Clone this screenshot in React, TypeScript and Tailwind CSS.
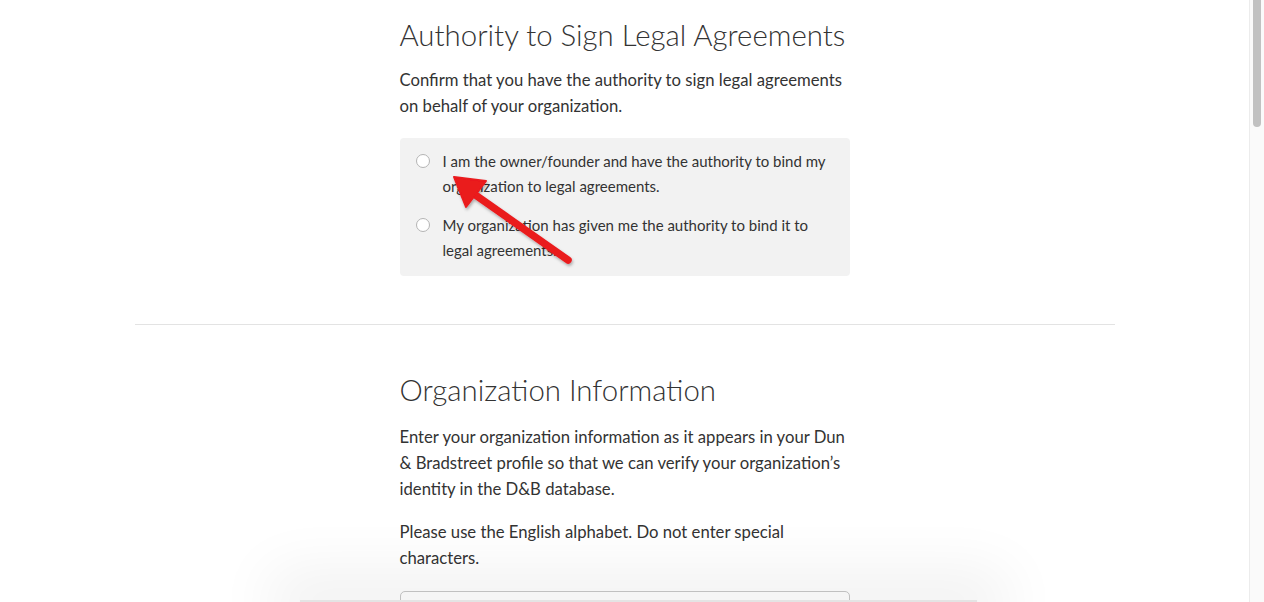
import { useState } from 'react'

const options = [
  'I am the owner/founder and have the authority to bind my organization to legal agreements.',
  'My organization has given me the authority to bind it to legal agreements.',
]

export default function App() {
  const [picked, setPicked] = useState<number | null>(null)

  return (
    <div className="relative flex h-screen w-full overflow-hidden bg-white text-[#333333] font-['Lato','Liberation_Sans',sans-serif]">
      <main className="flex-1 overflow-hidden">
        <section className="mx-auto w-[450px] pt-[15px]">
          <h1 className="whitespace-nowrap text-[29.4px] leading-[40px] font-light">Authority to Sign Legal Agreements</h1>
          <p className="mt-[12px] text-[16.7px] leading-[26px]">
            Confirm that you have the authority to sign legal agreements on behalf of your organization.
          </p>
          <div className="mt-[19px] flex flex-col gap-[14px] rounded bg-[#f2f2f2] pl-[16px] pr-[16px] pt-[11px] pb-[13px]">
            {options.map((label, i) => (
              <label key={i} className="flex cursor-pointer items-start gap-[13px] text-[15px] leading-[25px]">
                <span className="mt-[5px] flex h-[14px] w-[14px] shrink-0 items-center justify-center rounded-full border border-[#b4b4b4] bg-white">
                  {picked === i && <span className="h-[6px] w-[6px] rounded-full bg-[#0070c9]" />}
                </span>
                <input type="radio" name="authority" className="hidden" checked={picked === i} onChange={() => setPicked(i)} />
                <span>{label}</span>
              </label>
            ))}
          </div>
        </section>

        <hr className="mx-auto mt-[48px] w-[980px] border-t border-[#e3e3e3]" />

        <section className="mx-auto w-[450px] pt-[45px]">
          <h2 className="text-[29.4px] leading-[40px] font-light">Organization Information</h2>
          <p className="mt-[14px] text-[16.7px] leading-[26px]">
            Enter your organization information as it appears in your Dun &amp; Bradstreet profile so that we can verify your organization’s identity in the D&amp;B database.
          </p>
          <p className="mt-[17px] text-[16.7px] leading-[26px]">
            Please use the English alphabet. Do not enter special characters.
          </p>
          <input className="mt-[20px] h-[40px] w-full rounded-[5px] border border-[#c8c8c8] bg-white" />
        </section>
      </main>

      <div className="w-[15px] shrink-0 border-l border-[#ececec] bg-[#fafafa] pl-[3px] pr-[3px]">
        <div className="h-[127px] w-[8px] rounded-b-full bg-[#c1c1c1]" />
      </div>

      <div className="absolute bottom-0 left-[300px] h-[2px] w-[677px] bg-[#e4e4e4] shadow-[0_0_60px_30px_rgba(0,0,0,0.06)]" />

      <svg className="pointer-events-none absolute left-0 top-0" width="1264" height="602">
        <defs>
          <filter id="ds" x="-20%" y="-20%" width="140%" height="140%">
            <feDropShadow dx="1" dy="2" stdDeviation="1.5" floodColor="#000" floodOpacity="0.3" />
          </filter>
        </defs>
        <g filter="url(#ds)" fill="#ea1a1f" stroke="#ea1a1f">
          <line x1="568" y1="260" x2="474" y2="194" strokeWidth="7.5" strokeLinecap="round" />
          <polygon points="454,177 486,181 466,207" strokeWidth="2" strokeLinejoin="round" />
        </g>
      </svg>
    </div>
  )
}
